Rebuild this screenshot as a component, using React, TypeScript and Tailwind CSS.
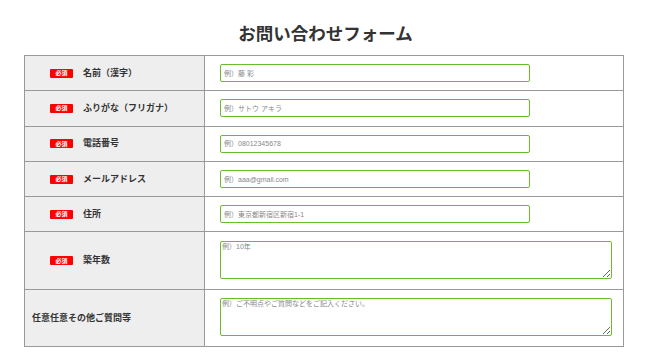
import React from 'react';

const FONT = { fontFamily: '"Liberation Sans", "Noto Sans CJK JP", sans-serif' };

const ROWS = [
  { label: '名前（漢字）', required: true, placeholder: '例）藤 彩', area: false },
  { label: 'ふりがな（フリガナ）', required: true, placeholder: '例）サトウ アキラ', area: false },
  { label: '電話番号', required: true, placeholder: '例）08012345678', area: false },
  { label: 'メールアドレス', required: true, placeholder: '例）aaa@gmail.com', area: false },
  { label: '住所', required: true, placeholder: '例）東京都新宿区新宿1-1', area: false },
  { label: '築年数', required: true, placeholder: '例）10年', area: true },
  { label: '任意任意その他ご質問等', required: false, placeholder: '例）ご不明点やご質問などをご記入ください。', area: true },
];

export default function App() {
  return (
    <div className="w-[651px] h-[354px] bg-white text-[#333]" style={FONT}>
      <h1 className="h-[55px] pt-[25px] text-center text-[17.5px] leading-[18px] font-bold">
        お問い合わせフォーム
      </h1>
      <table className="ml-[24px] w-[600px] border-collapse border border-[#999]">
        <tbody>
          {ROWS.map((row) => (
            <tr key={row.label} className={row.area ? 'h-[57.5px]' : 'h-[35.3px]'}>
              <td
                className={`w-[180px] border border-[#999] bg-[#eee] align-middle ${row.required ? 'pl-[25px]' : 'pl-[7px]'}`}
              >
                <div className="flex items-center">
                  {row.required && (
                    <span className="mr-[10px] flex h-[9px] w-[23px] items-center justify-center rounded-[1px] bg-[#f00] text-[6px] leading-none font-bold text-white">
                      必須
                    </span>
                  )}
                  <span className="text-[9px] leading-none font-bold">{row.label}</span>
                </div>
              </td>
              <td className="border border-[#999] pl-[15px] align-middle">
                {row.area ? (
                  <textarea
                    placeholder={row.placeholder}
                    className="-mt-[2px] block h-[38px] w-[392px] rounded-[2px] border-[1.5px] border-[#6cbb2a] px-[1px] py-0 text-[7px] leading-[10px] placeholder:text-[#888] outline-none"
                  />
                ) : (
                  <input
                    type="text"
                    placeholder={row.placeholder}
                    className="block h-[18px] w-[310px] rounded-[2px] border-[1.5px] border-[#6cbb2a] px-[3px] text-[7px] placeholder:text-[#888] outline-none"
                  />
                )}
              </td>
            </tr>
          ))}
        </tbody>
      </table>
    </div>
  );
}
